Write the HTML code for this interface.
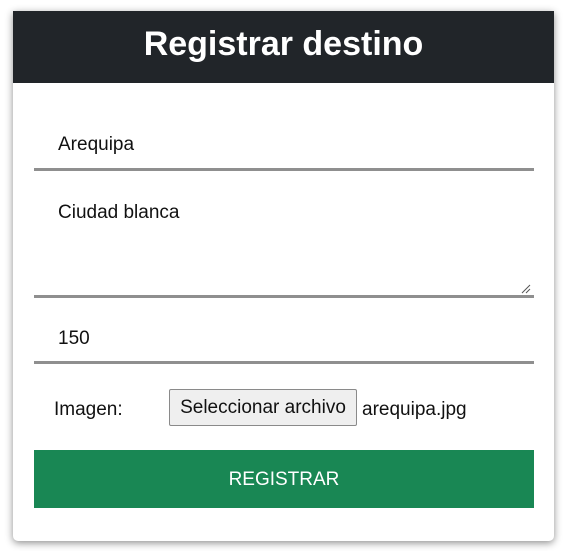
<!DOCTYPE html>
<html><head><style>
body{margin:0;width:563px;height:551px;background:#fff;font-family:"Liberation Sans",sans-serif;position:relative;overflow:hidden}
.card{position:absolute;left:13px;top:11px;width:541px;height:530px;background:#fff;border-radius:0 0 5px 5px;box-shadow:0 2px 8px rgba(0,0,0,.45)}
.hd{position:absolute;left:0;top:0;width:541px;height:72px;background:#212529;color:#fff;font-size:34px;font-weight:bold;text-align:center;line-height:66px}
.t{position:absolute;font-size:19px;color:#111}
.ln{position:absolute;left:34px;width:500px;height:3px;background:#8f8f8f}
.fb{position:absolute;left:169px;top:389px;width:186px;height:35px;border:1px solid #8a8a8a;border-radius:2px;background:#efefef;font-size:19px;line-height:36px;text-align:center;color:#111}
.btn{position:absolute;left:34px;top:450px;width:500px;height:58px;background:#198754;color:#fff;font-size:19px;text-align:center;line-height:60px}
</style></head><body>
<div class="card"><div class="hd">Registrar destino</div></div>
<div class="t" style="left:58px;top:134px">Arequipa</div>
<div class="ln" style="top:168px"></div>
<div class="t" style="left:58px;top:202px">Ciudad blanca</div>
<svg style="position:absolute;left:520px;top:283px" width="12" height="12"><path d="M2 10L10 2M6 10L10 6" stroke="#555" stroke-width="1"/></svg>
<div class="ln" style="top:295px"></div>
<div class="t" style="left:58px;top:328px">150</div>
<div class="ln" style="top:361px"></div>
<div class="t" style="left:54px;top:399px">Imagen:</div>
<div class="fb">Seleccionar archivo</div>
<div class="t" style="left:362px;top:399px">arequipa.jpg</div>
<div class="btn">REGISTRAR</div>
</body></html>
